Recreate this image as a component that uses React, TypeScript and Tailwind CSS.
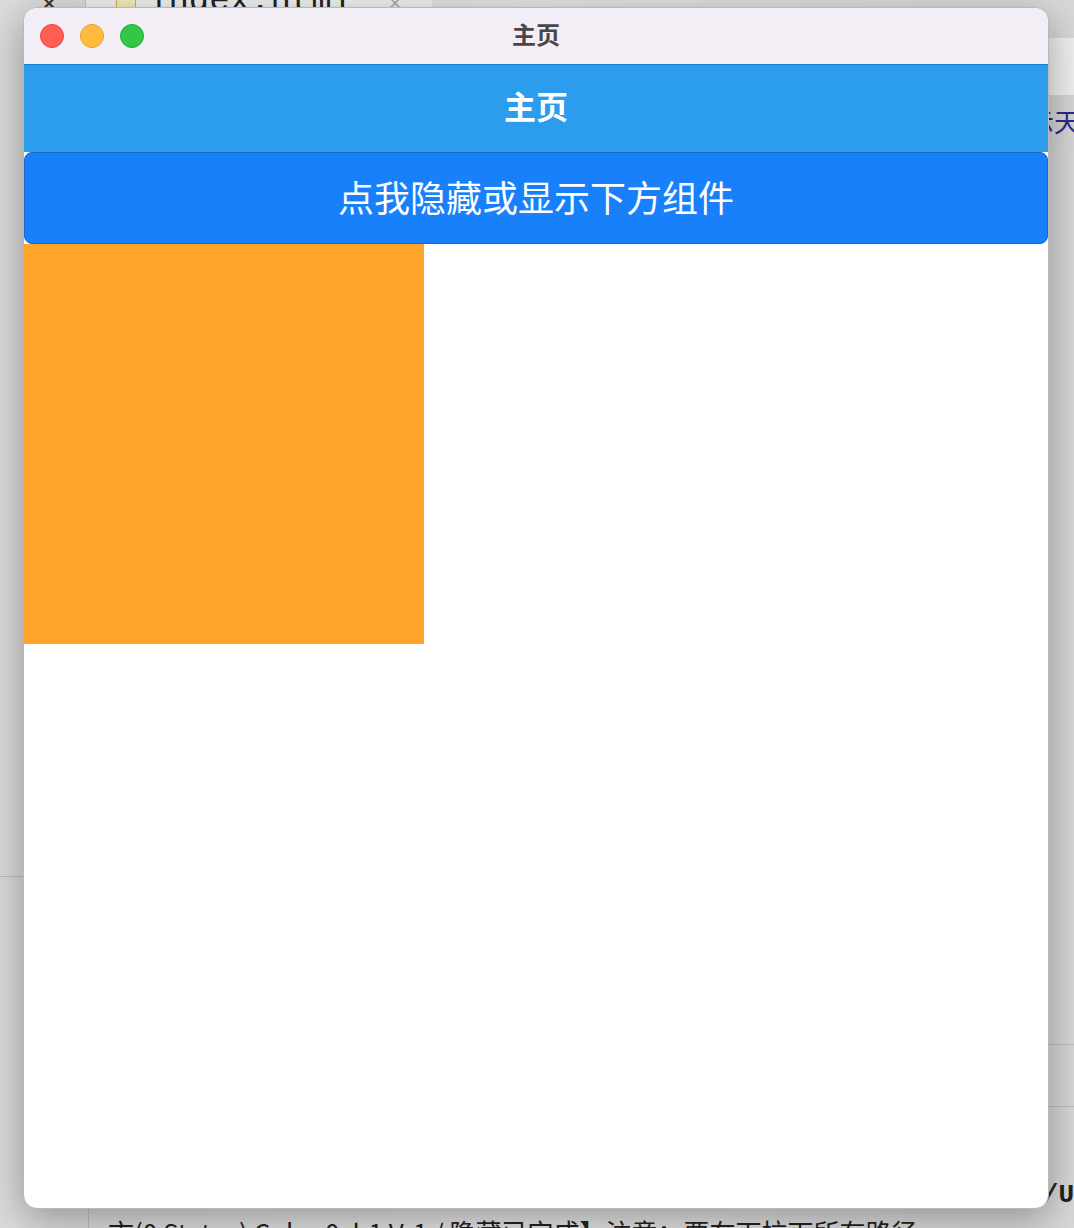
import React, { useState } from "react";

const cjk = { fontFamily: '"Noto Sans CJK SC", "Noto Sans", sans-serif' };

function TrafficLights() {
  return (
    <div className="flex items-center gap-4 pl-4">
      <span className="h-6 w-6 rounded-full bg-[#fe5f57] border border-[#e2463f]" />
      <span className="h-6 w-6 rounded-full bg-[#ffbb3d] border border-[#e0a028]" />
      <span className="h-6 w-6 rounded-full bg-[#33c748] border border-[#22a835]" />
    </div>
  );
}

function Desktop() {
  return (
    <div className="absolute inset-0 bg-gradient-to-r from-[#dcdcdc] via-[#e6e6e6] to-[#d8d8d8]">
      {/* editor tabs peeking out on top */}
      <div className="flex h-[38px] items-start">
        <div className="w-[86px] h-full border-r border-[#c8c8c8] text-[30px] leading-none text-[#333] -mt-[14px] pl-[34px]">×</div>
        <div className="w-[346px] h-full bg-[#f2f2f2] -mt-[18px] flex items-center gap-3 pl-[30px]">
          <span className="h-6 w-5 rounded-sm border border-[#c9b84a] bg-[#f4eec0]" />
          <span className="text-[34px] text-[#222]" style={{ fontFamily: '"Liberation Mono", monospace' }}>index.html</span>
          <span className="ml-5 text-[22px] text-[#aaa]">×</span>
        </div>
      </div>
      <div className="absolute right-0 top-[38px] w-[60px] h-[57px] bg-[#f0f0f0]" />
      <div className="absolute right-0 top-[95px] w-[60px] h-[55px] bg-[#d6d6d6] flex items-center overflow-hidden">
        <span className="text-[26px] text-[#2b2b8a] whitespace-nowrap ml-[14px] -mt-[4px]" style={cjk}>示天</span>
      </div>
      <div className="absolute left-0 top-[876px] w-[24px] border-t border-[#bdbdbd]" />
      <div className="absolute right-0 top-[1044px] w-[26px] border-t border-[#bdbdbd]" />
      <div className="absolute right-0 top-[1106px] w-[26px] border-t border-[#bdbdbd]" />
      <div className="absolute left-[88px] top-[1110px] bottom-0 border-l border-[#c0c0c0]" />
      <div className="absolute right-0 top-[1176px] text-[26px] font-bold text-[#222]" style={{ fontFamily: '"Liberation Mono", monospace' }}>/U</div>
      <div className="absolute left-[108px] top-[1212px] text-[26px] text-[#222] whitespace-nowrap" style={cjk}>
        市(0 Status) Color 0xb1 Vr1 / 隐藏已完成】注意：要在下拉下所有路径
      </div>
    </div>
  );
}

export default function App() {
  const [shown, setShown] = useState(true);
  return (
    <div className="relative w-[1074px] h-[1228px] overflow-hidden" style={cjk}>
      <Desktop />
      <div className="absolute left-[23px] top-[7px] w-[1026px] h-[1202px] rounded-[14px] bg-white border border-[#b9b9b9] shadow-[0_10px_40px_rgba(0,0,0,0.35)] overflow-hidden flex flex-col">
        <div className="relative h-[56px] shrink-0 bg-[#f3eef5] flex items-center">
          <TrafficLights />
          <div className="absolute inset-0 flex items-center justify-center pb-[5px] text-[24px] font-bold text-[#4a4548]">主页</div>
        </div>
        <div className="h-[88px] shrink-0 bg-[#2c9ced] border-t border-[#1b7fc8] flex items-center justify-center pb-[8px] text-[32px] font-bold text-white">
          主页
        </div>
        <button
          onClick={() => setShown(!shown)}
          className="h-[92px] shrink-0 bg-[#1880fb] border border-[#1469cf] rounded-[8px] flex items-center justify-center pb-[5px] text-[36px] text-white"
        >
          点我隐藏或显示下方组件
        </button>
        {shown && <div className="w-[400px] h-[400px] bg-[#ffa42a]" />}
      </div>
    </div>
  );
}
